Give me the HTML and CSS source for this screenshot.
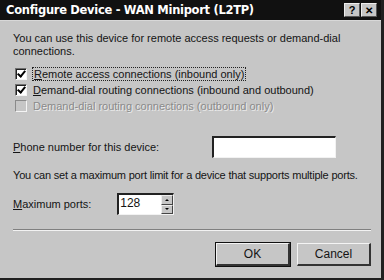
FILE: index.html
```html
<!DOCTYPE html>
<html lang="en">
<head>
  <meta charset="UTF-8">
  <title>Configure Device - WAN Miniport (L2TP)</title>
  <link rel="stylesheet" href="styles.css">
</head>
<body>
  <div class="window">
    <div class="title-bar">
      <span class="title">Configure Device - WAN Miniport (L2TP)</span>
      <div class="title-buttons">
        <span class="tb-btn">?</span>
        <span class="tb-btn close">&#x2715;</span>
      </div>
    </div>

    <div class="content">
      <p class="intro">You can use this device for remote access requests or demand-dial connections.</p>

      <div class="checks">
        <label class="check">
          <span class="box checked"></span>
          <span class="focus"><u>R</u>emote access connections (inbound only)</span>
        </label>
        <label class="check">
          <span class="box checked"></span>
          <span><u>D</u>emand-dial routing connections (inbound and outbound)</span>
        </label>
        <label class="check disabled">
          <span class="box"></span>
          <span>Demand-dial routing connections (outbound only)</span>
        </label>
      </div>

      <div class="phone-row">
        <span><u>P</u>hone number for this device:</span>
        <span class="text-box"></span>
      </div>

      <p class="port-note">You can set a maximum port limit for a device that supports multiple ports.</p>

      <div class="ports-row">
        <span><u>M</u>aximum ports:</span>
        <div class="spin-box">
          <span class="spin-value">128</span>
          <div class="spin-arrows">
            <span class="arrow up"></span>
            <span class="arrow down"></span>
          </div>
        </div>
      </div>

      <div class="separator"></div>

      <div class="buttons">
        <button class="btn default">OK</button>
        <button class="btn">Cancel</button>
      </div>
    </div>
  </div>
</body>
</html>
```

FILE: styles.css
```css
body {
  margin: 0;
  padding: 0;
  width: 384px;
  height: 280px;
  overflow: hidden;
  background-color: #c6c6c6;
  font-family: "Liberation Sans", Arial, sans-serif;
  font-size: 11px;
  color: #141414;
}

.window {
  width: 381px;
  height: 278px;
  border-right: 3px solid #202020;
  border-bottom: 2px solid #202020;
  background-color: #c6c6c6;
  display: flex;
  flex-direction: column;
}

.title-bar {
  height: 20px;
  background-color: #111;
  display: flex;
  align-items: center;
  justify-content: space-between;
  padding: 0 4px 0 6px;
  border-bottom: 1px solid #d8d8d8;
}

.title {
  color: #fff;
  font-family: "DejaVu Sans", sans-serif;
  font-weight: bold;
  font-size: 11.5px;
  letter-spacing: -0.3px;
}

.title-buttons {
  display: flex;
  gap: 1px;
}

.tb-btn {
  width: 16px;
  height: 14px;
  background-color: #c6c6c6;
  border-top: 1px solid #eee;
  border-left: 1px solid #eee;
  border-right: 1px solid #555;
  border-bottom: 1px solid #555;
  box-sizing: border-box;
  display: flex;
  align-items: center;
  justify-content: center;
  font-weight: bold;
  font-size: 11px;
  color: #000;
}

.tb-btn.close {
  font-size: 10px;
}

.content {
  padding: 11px 12px 0 13px;
  display: flex;
  flex-direction: column;
}

.intro {
  margin: 0;
  line-height: 13px;
  width: 335px;
}

.checks {
  display: flex;
  flex-direction: column;
  gap: 3px;
  margin-top: 9px;
  margin-left: 2px;
}

.check {
  display: flex;
  align-items: center;
  gap: 6px;
  height: 13px;
}

.box {
  width: 12px;
  height: 12px;
  box-sizing: border-box;
  background-color: #fff;
  border-top: 1px solid #707070;
  border-left: 1px solid #707070;
  border-right: 1px solid #f4f4f4;
  border-bottom: 1px solid #f4f4f4;
  box-shadow: inset 1px 1px 0 #222;
  position: relative;
}

.box.checked::after {
  content: "";
  position: absolute;
  left: 3px;
  top: 0;
  width: 3px;
  height: 6px;
  border-right: 2px solid #000;
  border-bottom: 2px solid #000;
  transform: rotate(40deg);
}

.focus {
  outline: 1px dotted #222;
  outline-offset: 0;
  padding: 0 1px;
}

.check.disabled {
  color: #8a8a8a;
  text-shadow: 1px 1px 0 #ececec;
}

.check.disabled .box {
  background-color: #c6c6c6;
  box-shadow: none;
  border-top-color: #8a8a8a;
  border-left-color: #8a8a8a;
}

.phone-row {
  display: flex;
  align-items: center;
  justify-content: space-between;
  margin-top: 24px;
  width: 323px;
}

.text-box {
  width: 124px;
  height: 22px;
  box-sizing: border-box;
  background-color: #fff;
  border-top: 2px solid #222;
  border-left: 2px solid #222;
  border-right: 1px solid #f2f2f2;
  border-bottom: 1px solid #f2f2f2;
}

.port-note {
  margin: 11px 0 0;
  white-space: nowrap;
  letter-spacing: -0.2px;
}

.ports-row {
  display: flex;
  align-items: center;
  gap: 26px;
  margin-top: 12px;
}

.spin-box {
  width: 57px;
  height: 22px;
  box-sizing: border-box;
  background-color: #fff;
  border-top: 2px solid #222;
  border-left: 2px solid #222;
  border-right: 1px solid #f2f2f2;
  border-bottom: 1px solid #f2f2f2;
  display: flex;
  justify-content: space-between;
}

.spin-value {
  padding-left: 1px;
  font-size: 12px;
  line-height: 17px;
}

.spin-arrows {
  width: 12px;
  display: flex;
  flex-direction: column;
}

.arrow {
  flex: 1;
  background-color: #c6c6c6;
  border-top: 1px solid #eee;
  border-left: 1px solid #eee;
  border-right: 1px solid #444;
  border-bottom: 1px solid #444;
  position: relative;
}

.arrow::after {
  content: "";
  position: absolute;
  left: 3px;
  top: 3px;
  border-left: 2px solid transparent;
  border-right: 2px solid transparent;
}

.arrow.up::after {
  border-bottom: 2px solid #000;
}

.arrow.down::after {
  top: 2px;
  border-top: 2px solid #000;
}

.separator {
  margin-top: 14px;
  width: 358px;
  border-top: 1px solid #808080;
  border-bottom: 1px solid #f2f2f2;
}

.buttons {
  display: flex;
  justify-content: flex-end;
  gap: 7px;
  margin-top: 12px;
  width: 358px;
}

.btn {
  width: 74px;
  height: 23px;
  font-family: "Liberation Sans", Arial, sans-serif;
  font-size: 12px;
  color: #141414;
  background-color: #c6c6c6;
  border-top: 1px solid #f4f4f4;
  border-left: 1px solid #f4f4f4;
  border-right: 2px solid #333;
  border-bottom: 2px solid #333;
  padding: 0;
}

.btn.default {
  outline: 1px solid #111;
}
```
